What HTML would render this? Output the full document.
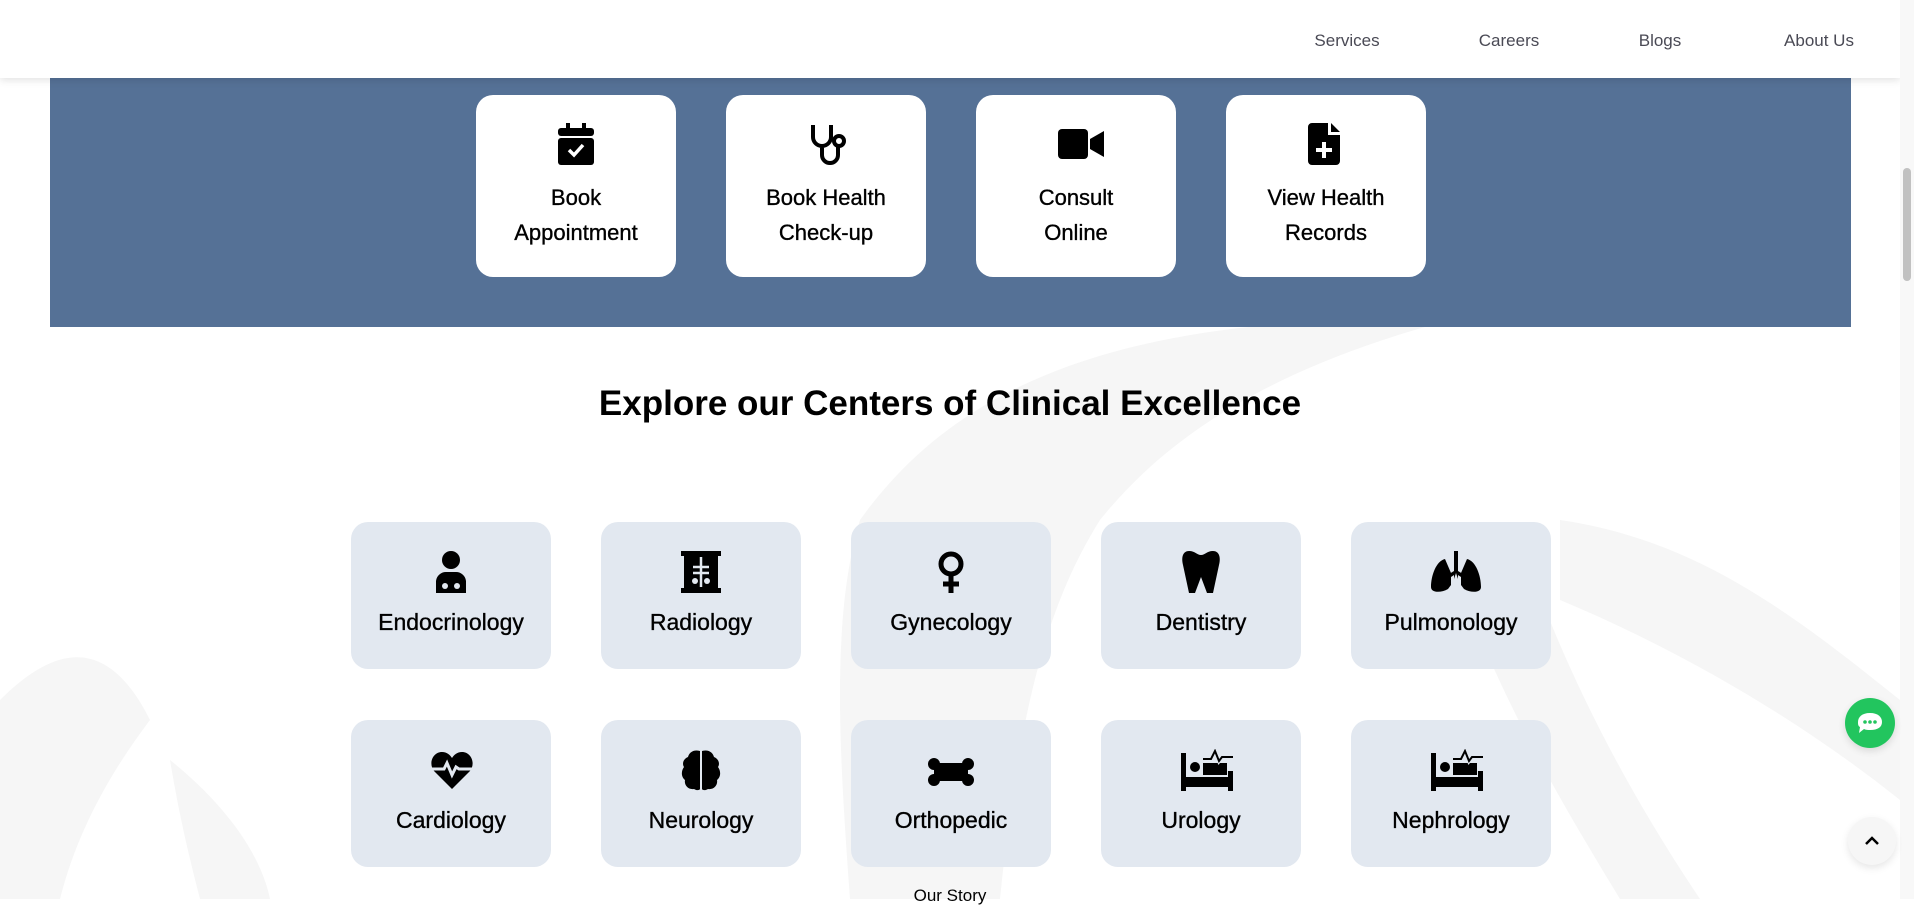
<!DOCTYPE html>
<html><head><meta charset="utf-8"><style>
*{margin:0;padding:0;box-sizing:border-box}
body{width:1914px;height:899px;overflow:hidden;background:#fff;font-family:"Liberation Sans",sans-serif;color:#000;position:relative}
.bg{position:absolute;left:0;top:0;width:1900px;height:899px;z-index:0}
header{position:absolute;left:0;top:0;width:1900px;height:78px;background:#fff;box-shadow:0 2px 8px rgba(0,0,0,.12);z-index:5}
header a{position:absolute;top:31px;font-size:17px;color:#4a4a55;text-decoration:none;transform:translateX(-50%)}
.band{position:absolute;left:50px;top:78px;width:1801px;height:249px;background:#557196;z-index:1}
.qc{position:absolute;top:95px;width:200px;height:182px;background:#fff;border-radius:17px;z-index:2;text-align:center}
.qc svg{position:absolute;left:82px;top:28px}
.qc div{position:absolute;top:85px;left:0;right:0;font-size:22px;line-height:35px;-webkit-text-stroke:0.35px #000}
h2{position:absolute;top:384px;left:0;width:1900px;text-align:center;font-size:35px;font-weight:700;z-index:2}
.c{position:absolute;width:200px;height:147px;background:#e2e8f0;border-radius:17px;z-index:2;text-align:center}
.c svg{position:absolute;left:80px;top:29px}
.c div{position:absolute;top:87px;left:0;right:0;font-size:23px;-webkit-text-stroke:0.35px #000}
.story{position:absolute;top:886px;left:0;width:1900px;text-align:center;font-size:17px;z-index:2}
.sb{position:absolute;right:0;top:0;width:14px;height:899px;background:#f8f8f8;z-index:6}
.sb i{position:absolute;left:3px;top:168px;width:8px;height:113px;background:#c1c1c1;border-radius:4px}
.chat{position:absolute;left:1845px;top:698px;width:50px;height:50px;border-radius:50%;background:#22c55e;z-index:7;box-shadow:0 3px 8px rgba(0,0,0,.12)}
.up{position:absolute;left:1848px;top:817px;width:48px;height:48px;border-radius:50%;background:#f6f6f6;z-index:7;box-shadow:0 3px 8px rgba(0,0,0,.1)}
</style></head><body>
<svg class="bg" viewBox="0 0 1900 899"><g fill="#f6f6f6">
<path d="M860 520 C960 380 1120 330 1340 320 L1450 320 C1300 360 1180 420 1100 520 C1050 600 1020 700 1000 899 L850 899 C840 760 830 620 860 520Z"/>
<path d="M1560 520 C1700 540 1800 620 1900 700 L1900 800 C1800 720 1680 650 1560 600Z"/>
<path d="M1450 560 C1500 700 1560 800 1620 899 L1700 899 C1620 780 1560 660 1520 540Z"/>
<path d="M0 700 C60 640 110 640 150 720 C120 760 80 820 60 899 L0 899Z"/>
<path d="M170 760 C220 800 260 850 270 899 L200 899 C190 860 180 820 170 760Z"/>
</g></svg>
<header>
<a style="left:1347px">Services</a><a style="left:1509px">Careers</a><a style="left:1660px">Blogs</a><a style="left:1819px">About Us</a>
</header>
<div class="band"></div>
<div class="qc" style="left:476px"><svg width="36" height="42" viewBox="0 0 36 42"><rect x="8" y="0" width="4" height="8" fill="#000"/><rect x="24" y="0" width="4" height="8" fill="#000"/><rect x="0" y="5" width="36" height="8" rx="3"/><rect x="0" y="15" width="36" height="27" rx="3"/><path d="M11 27l5 5 9-10" stroke="#fff" stroke-width="3.5" fill="none"/></svg><div>Book<br>Appointment</div></div>
<div class="qc" style="left:726px"><svg width="44" height="42" viewBox="0 0 44 42"><path d="M5 2 V14 a9 9 0 0 0 18 0 V2 M14 23 V32 a8 8 0 0 0 16 0 V24" stroke="#000" stroke-width="4" fill="none"/><circle cx="31" cy="18" r="5" stroke="#000" stroke-width="4" fill="none"/></svg><div>Book Health<br>Check-up</div></div>
<div class="qc" style="left:976px"><svg width="46" height="42" viewBox="0 0 46 42"><rect x="0" y="6" width="30" height="30" rx="4"/><path d="M32 16 L46 8 V34 L32 26Z"/></svg><div>Consult<br>Online</div></div>
<div class="qc" style="left:1226px"><svg width="36" height="42" viewBox="0 0 36 42"><path d="M4 0 H20 V12 H32 V38 a4 4 0 0 1 -4 4 H4 a4 4 0 0 1 -4 -4 V4 a4 4 0 0 1 4 -4Z M23 0 L32 9 H23Z"/><path d="M16 19 V35 M8 27 H24" stroke="#fff" stroke-width="4"/></svg><div>View Health<br>Records</div></div>
<h2>Explore our Centers of Clinical Excellence</h2>
<div class="c" style="left:351px;top:522px"><svg width="40" height="42" viewBox="0 0 40 42"><circle cx="20" cy="9" r="9"/><path d="M5 42 V30 a10 10 0 0 1 10 -9 H25 a10 10 0 0 1 10 9 V42Z"/><circle cx="14" cy="35" r="3" fill="#e2e8f0"/><circle cx="26" cy="35" r="3" fill="#e2e8f0"/></svg><div>Endocrinology</div></div>
<div class="c" style="left:601px;top:522px"><svg width="40" height="42" viewBox="0 0 40 42"><rect x="0" y="0" width="40" height="5"/><rect x="0" y="37" width="40" height="5"/><rect x="3" y="3" width="34" height="36"/><path d="M20 6 V36 M12 16 H28 M12 22 H28" stroke="#e2e8f0" stroke-width="2.5"/><circle cx="14" cy="30" r="3" fill="#e2e8f0"/><circle cx="26" cy="30" r="3" fill="#e2e8f0"/></svg><div>Radiology</div></div>
<div class="c" style="left:851px;top:522px"><svg width="40" height="42" viewBox="0 0 40 42"><circle cx="20" cy="13" r="10" stroke="#000" stroke-width="5" fill="none"/><path d="M20 23 V42 M12 33 H28" stroke="#000" stroke-width="5"/></svg><div>Gynecology</div></div>
<div class="c" style="left:1101px;top:522px"><svg width="40" height="42" viewBox="0 0 40 42"><path d="M8 0 C2 0 0 6 2 14 L8 42 H14 L20 26 L26 42 H32 L38 14 C40 6 38 0 32 0 C26 0 24 4 20 4 C16 4 14 0 8 0Z"/></svg><div>Dentistry</div></div>
<div class="c" style="left:1351px;top:522px"><svg width="50" height="42" viewBox="0 0 50 42"><path d="M23 0 H27 V20 L40 28 L36 30 L27 24 V28 L25 22 L23 28 V24 L14 30 L10 28 L23 20Z"/><path d="M14 8 C5 10 0 25 0 36 C0 42 10 42 17 38 L20 34 V22 Z M36 8 C45 10 50 25 50 36 C50 42 40 42 33 38 L30 34 V22Z"/></svg><div>Pulmonology</div></div>
<div class="c" style="left:351px;top:720px"><svg width="42" height="42" viewBox="0 0 42 42"><path d="M21 40 L3 22 C-3 14 2 3 11 3 C16 3 19 6 21 9 C23 6 26 3 31 3 C40 3 45 14 39 22Z"/><path d="M0 20 H13 L16 14 L21 26 L25 18 L28 20 H42" stroke="#e2e8f0" stroke-width="3" fill="none"/></svg><div>Cardiology</div></div>
<div class="c" style="left:601px;top:720px"><svg width="40" height="42" viewBox="0 0 40 42"><path d="M19 2 C12 0 8 4 7 8 C2 10 1 15 3 18 C0 22 0 28 4 31 C3 36 7 41 13 40 C16 42 19 41 19 40Z M21 2 C28 0 32 4 33 8 C38 10 39 15 37 18 C40 22 40 28 36 31 C37 36 33 41 27 40 C24 42 21 41 21 40Z"/></svg><div>Neurology</div></div>
<div class="c" style="left:851px;top:720px"><svg width="46" height="30" viewBox="0 0 46 30" style="left:77px;top:37px"><circle cx="6" cy="7" r="6"/><circle cx="6" cy="23" r="6"/><circle cx="40" cy="7" r="6"/><circle cx="40" cy="23" r="6"/><rect x="6" y="6" width="34" height="18"/></svg><div>Orthopedic</div></div>
<div class="c" style="left:1101px;top:720px"><svg width="52" height="42" viewBox="0 0 52 42"><path d="M0 4 H5 V28 H47 V22 H52 V42 H47 V38 H5 V42 H0Z"/><circle cx="14" cy="18" r="5"/><path d="M22 26 V14 H46 V26Z"/><path d="M22 10 H30 L34 2 L38 12 L41 8 H52" stroke="#e2e8f0" stroke-width="4" fill="none"/><path d="M22 10 H30 L34 2 L38 12 L41 8 H52" stroke="#000" stroke-width="2" fill="none"/></svg><div>Urology</div></div>
<div class="c" style="left:1351px;top:720px"><svg width="52" height="42" viewBox="0 0 52 42"><path d="M0 4 H5 V28 H47 V22 H52 V42 H47 V38 H5 V42 H0Z"/><circle cx="14" cy="18" r="5"/><path d="M22 26 V14 H46 V26Z"/><path d="M22 10 H30 L34 2 L38 12 L41 8 H52" stroke="#e2e8f0" stroke-width="4" fill="none"/><path d="M22 10 H30 L34 2 L38 12 L41 8 H52" stroke="#000" stroke-width="2" fill="none"/></svg><div>Nephrology</div></div>
<div class="story">Our Story</div>
<div class="chat"><svg width="50" height="50" viewBox="0 0 50 50"><path d="M25 15 C33 15 37 19 37 24 C37 29 33 32 25 32 C23 32 21 32 19 31 L14 35 L15 29 C13 28 13 26 13 24 C13 19 17 15 25 15Z" fill="#fff"/><circle cx="20" cy="24" r="1.8" fill="#22c55e"/><circle cx="25" cy="24" r="1.8" fill="#22c55e"/><circle cx="30" cy="24" r="1.8" fill="#22c55e"/></svg></div>
<div class="up"><svg width="48" height="48" viewBox="0 0 48 48"><path d="M18 27 L24 21 L30 27" stroke="#000" stroke-width="2.5" fill="none"/></svg></div>
<div class="sb"><i></i></div>
</body></html>
